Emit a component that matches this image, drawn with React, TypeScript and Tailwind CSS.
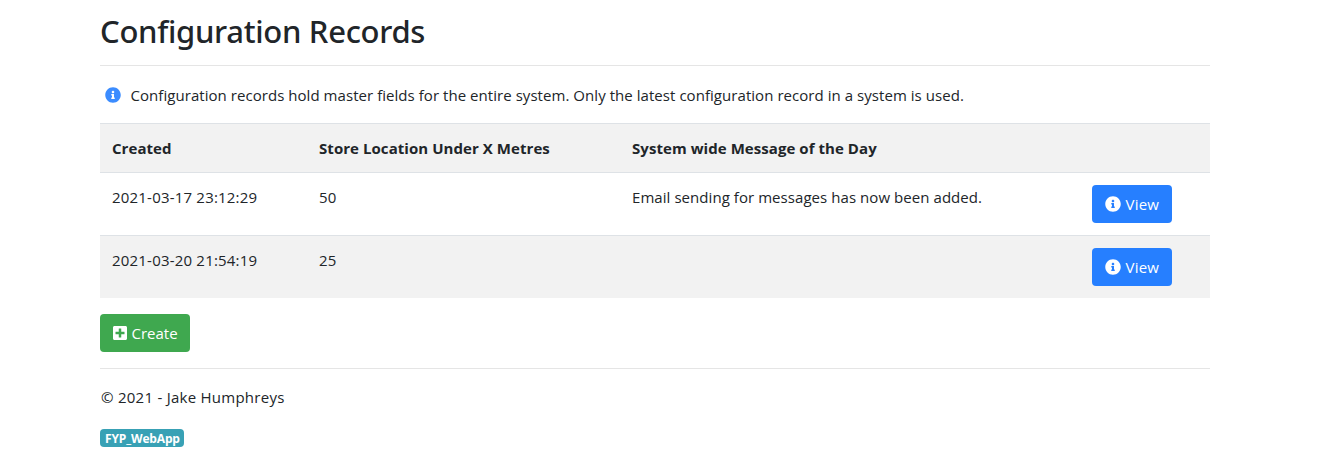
import { FaInfoCircle, FaPlusSquare } from "react-icons/fa";

const rows = [
  { created: "2021-03-17 23:12:29", metres: "50", message: "Email sending for messages has now been added." },
  { created: "2021-03-20 21:54:19", metres: "25", message: "" },
];

const columns = "grid grid-cols-[207px_313px_460px_130px]";

export default function App() {
  return (
    <div className="min-h-screen bg-white font-['Open_Sans','Noto_Sans',sans-serif] text-[#212529] text-[15px] leading-6">
      <main className="ml-[100px] w-[1110px]">
        <h1 className="h-[65px] pt-3 font-['Noto_Sans','Open_Sans',sans-serif] text-[31px] leading-[38px] font-medium tracking-[-0.3px] whitespace-nowrap">
          Configuration Records
        </h1>
        <hr className="border-[#e5e5e5]" />
        <p className="mt-[17px] mb-[16px] flex items-center pl-[5px] tracking-[0.05px]">
          <FaInfoCircle className="mr-[9.5px] size-4 text-[#3b8cff]" />
          <span>Configuration records hold master fields for the entire system. Only the latest configuration record in a system is used.</span>
        </p>
        <div>
          <div className={`${columns} h-[49px] border-t border-[#dee2e6] bg-[#f2f2f2] pt-3 font-bold tracking-[0.06px]`}>
            <span className="px-3">Created</span>
            <span className="px-3">Store Location Under X Metres</span>
            <span className="px-3">System wide Message of the Day</span>
          </div>
          {rows.map((r, i) => (
            <div key={r.created} className={`${columns} h-[63px] border-t border-[#dee2e6] pt-3 ${i % 2 ? "bg-[#f2f2f2]" : ""}`}>
              <span className="px-3 tracking-[0.2px]">{r.created}</span>
              <span className="px-3 tracking-[0.2px]">{r.metres}</span>
              <span className="px-3 tracking-[0.06px]">{r.message}</span>
              <span className="px-3">
                <button className="flex h-[38px] w-20 items-center gap-[4.5px] rounded bg-[#267fff] pl-[13px] tracking-[0.2px] text-white">
                  <FaInfoCircle className="size-4" />
                  <span>View</span>
                </button>
              </span>
            </div>
          ))}
        </div>
        <button className="mt-4 flex h-[38px] w-[90px] items-center gap-[3.5px] rounded bg-[#3fa84f] pl-3 text-white">
          <FaPlusSquare className="size-4" />
          <span>Create</span>
        </button>
        <hr className="mt-4 border-[#e5e5e5]" />
        <footer className="pt-4">
          <p className="pl-px tracking-[0.26px]">© 2021 - Jake Humphreys</p>
          <span className="mt-5 flex h-[18px] w-[84px] items-center rounded bg-[#38a1b5] pt-px pl-[5px] text-[12px] leading-[17px] font-bold tracking-[-0.15px] text-white">
            FYP_WebApp
          </span>
        </footer>
      </main>
    </div>
  );
}
